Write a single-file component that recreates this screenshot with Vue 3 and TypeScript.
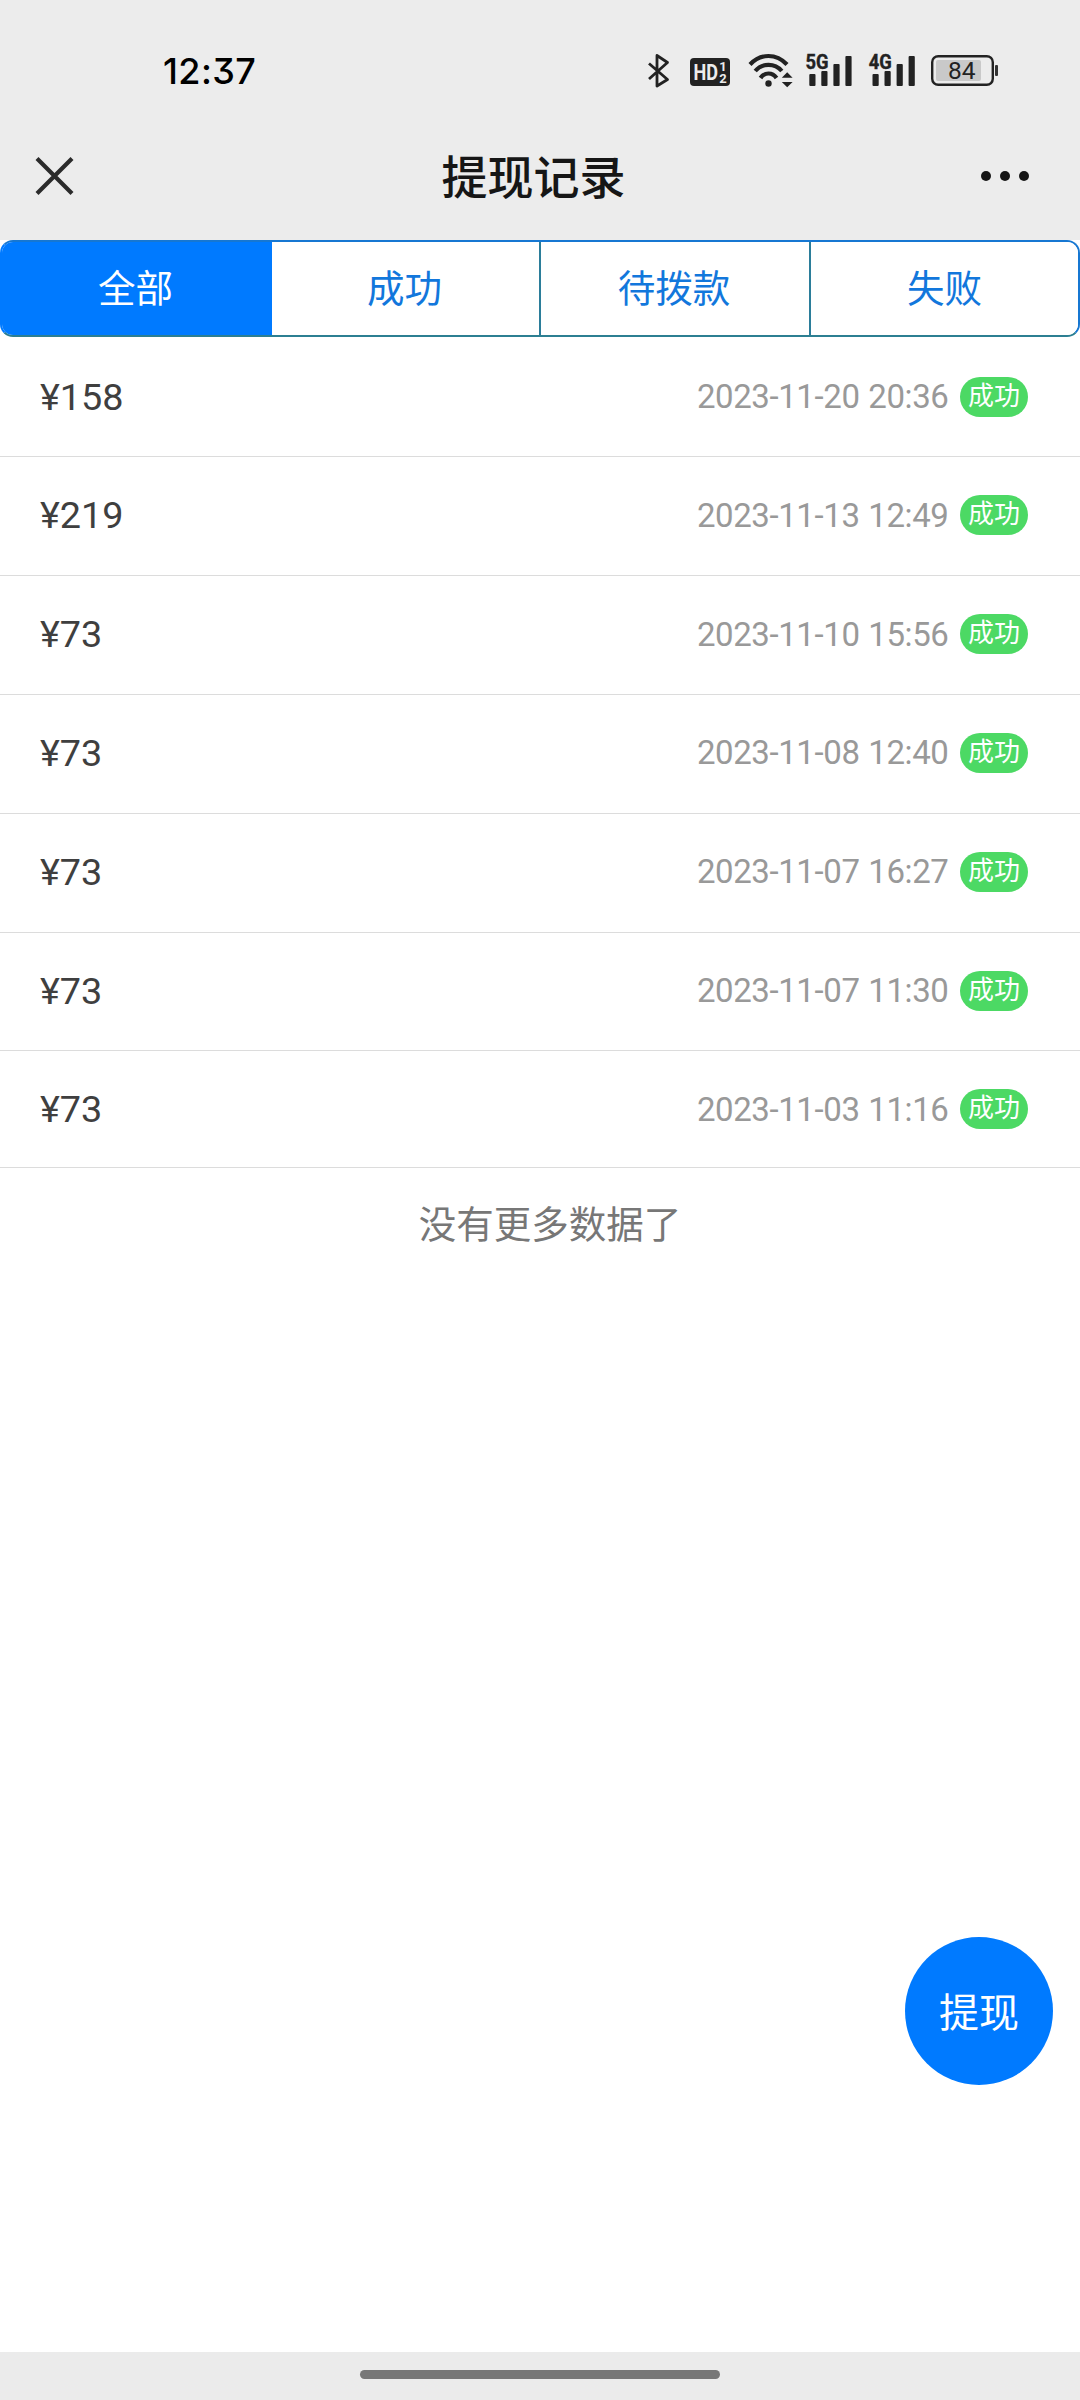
<script setup lang="ts">
interface Withdrawal {
  amount: number
  time: string
}

const tabs: string[] = ['全部', '成功', '待拨款', '失败']
const active = 0

const records: Withdrawal[] = [
  { amount: 158, time: '2023-11-20 20:36' },
  { amount: 219, time: '2023-11-13 12:49' },
  { amount: 73, time: '2023-11-10 15:56' },
  { amount: 73, time: '2023-11-08 12:40' },
  { amount: 73, time: '2023-11-07 16:27' },
  { amount: 73, time: '2023-11-07 11:30' },
  { amount: 73, time: '2023-11-03 11:16' },
]

const networks = [
  { label: '5G', x: 0 },
  { label: '4G', x: 63.2 },
]
</script>

<template>
  <div class="screen">
    <div class="status">
      <span class="clock">12:37</span>
      <svg class="status-icons" width="360" height="40" viewBox="640 50 360 40">
        <!-- bluetooth -->
        <path d="M649 63.5 667.5 79.5 657 86V55.5L667.5 62.5 649 79" fill="none" stroke="#222" stroke-width="2.8" stroke-linejoin="round" />
        <!-- HD calling -->
        <rect x="690" y="58" width="40" height="28" rx="4" fill="#222" />
        <text x="693.5" y="80.3" class="bold" font-size="22.5" fill="#ececec" textLength="24.5" lengthAdjust="spacingAndGlyphs">HD</text>
        <text x="719.2" y="71" class="bold" font-size="13" fill="#ececec">1</text>
        <text x="719.2" y="82.7" class="bold" font-size="13" fill="#ececec">2</text>
        <!-- wifi -->
        <g fill="none" stroke="#222" stroke-width="4.2">
          <path d="M750 64.5Q758 56 768.5 56T787 64.5" />
          <path d="M755.2 71Q760.5 64.8 768.5 64.8T781.8 71" />
          <path d="M760.5 78Q763.5 73.5 768.5 73.5T776.5 78" />
        </g>
        <circle cx="768.5" cy="83.5" r="3.2" fill="#222" />
        <path d="M781.8 77.8 787.2 72.3 792.6 77.8ZM781.8 82 787.2 87.3 792.6 82Z" fill="#222" />
        <!-- mobile networks -->
        <g v-for="n in networks" :key="n.label" :transform="`translate(${n.x} 0)`" fill="#222">
          <rect x="809.3" y="74" width="6.2" height="12" rx="1" />
          <rect x="821.3" y="71" width="6.2" height="15" rx="1" />
          <rect x="833.4" y="64" width="6.2" height="22" rx="1" />
          <rect x="845.4" y="56" width="6.2" height="30" rx="1" />
          <text x="805.5" y="68.6" class="bold" font-size="20.5" stroke="#222" stroke-width="0.4" textLength="23" lengthAdjust="spacingAndGlyphs">{{ n.label }}</text>
        </g>
        <!-- battery -->
        <rect x="932.2" y="56.2" width="60.6" height="28.6" rx="6" fill="none" stroke="#222" stroke-width="2.4" />
        <rect x="936" y="60" width="45" height="21" rx="2" fill="#c9c9c9" />
        <rect x="995" y="65" width="3" height="11" rx="1" fill="#333" />
        <text x="948" y="79.2" font-size="24.5" fill="#222">84</text>
      </svg>
    </div>

    <header class="nav">
      <svg width="40" height="40" viewBox="0 0 40 40" fill="none" stroke="#2b2b2b" stroke-width="4.2">
        <path d="M3 2.5 38 37.5M38 2.5 3 37.5" />
      </svg>
      <h1>提现记录</h1>
      <svg width="50" height="12" viewBox="0 0 50 12" fill="#161616">
        <circle cx="6" cy="6" r="5" /><circle cx="25" cy="6" r="5" /><circle cx="44" cy="6" r="5" />
      </svg>
    </header>

    <nav class="tabs">
      <button v-for="(t, i) in tabs" :key="t" :class="['tab', { active: i === active }]">{{ t }}</button>
    </nav>

    <ul class="list">
      <li v-for="r in records" :key="r.time">
        <span class="amount">¥{{ r.amount }}</span>
        <span class="time">{{ r.time }}</span>
        <span class="badge">成功</span>
      </li>
    </ul>
    <p class="end">没有更多数据了</p>

    <button class="fab">提现</button>
    <footer class="gesture"><i></i></footer>
  </div>
</template>

<style>
body {
  margin: 0;
}
</style>

<style scoped>
.screen {
  position: relative;
  display: flex;
  flex-direction: column;
  width: 1080px;
  height: 2400px;
  background: #fff;
  font-family: Roboto, 'Noto Sans CJK SC', sans-serif;
  overflow: hidden;
}
.status {
  display: flex;
  align-items: flex-start;
  justify-content: space-between;
  box-sizing: border-box;
  height: 136px;
  padding: 50px 80px 0 163px;
  background: #ececec;
}
.clock {
  font: 500 36px/42px Inter, sans-serif;
  font-feature-settings: 'cv09';
  letter-spacing: 0.4px;
  color: #000;
}
.bold {
  font-weight: 700;
}
.nav {
  display: flex;
  align-items: center;
  box-sizing: border-box;
  height: 104px;
  padding: 0 50px 24px 34px;
  background: #ececec;
}
.nav h1 {
  flex: 1;
  margin: 0;
  padding: 3px 0 0 13px;
  text-align: center;
  font-size: 46px;
  line-height: 60px;
  font-weight: 500;
  color: #161616;
}
.tabs {
  display: grid;
  grid-template-columns: 270px 267px 270px 1fr;
  box-sizing: border-box;
  height: 97px;
  border: 2px solid #1677d2;
  border-bottom-color: #2c7f92;
  border-radius: 13px;
  background: #fff;
  overflow: hidden;
}
.tab {
  padding: 0;
  border: 0;
  border-left: 2px solid #2b7d9a;
  background: #fff;
  font: 37.5px/48px Roboto, 'Noto Sans CJK SC', sans-serif;
  color: #1277dc;
}
.tab:nth-child(2) {
  padding-right: 2px;
  border-left: 0;
}
.tab:nth-child(3) {
  padding-right: 2px;
}
.tab.active {
  margin: -2px 0 -2px -2px;
  padding-right: 1px;
  border-left: 0;
  background: #007aff;
  color: #fff;
}
.tabs:has(.active:first-child) {
  border-left-color: #007aff;
}
.list {
  margin: 1.7px 0 0;
  padding: 0;
  list-style: none;
}
.list li {
  display: flex;
  align-items: center;
  box-sizing: border-box;
  height: 118.8px;
  padding: 0 52px 2px 40px;
  border-bottom: 1px solid #dcdcdc;
}
.list li:last-child {
  height: 116.8px;
  padding-bottom: 0;
}
.amount {
  flex: 1;
  font-size: 37.8px;
  color: #3f3f3f;
}
.time {
  font-size: 33px;
  letter-spacing: -0.4px;
  word-spacing: 1px;
  color: #999;
}
.badge {
  margin-left: 11.5px;
  width: 68px;
  height: 40px;
  border-radius: 20px;
  background: #4cd964;
  color: #fff;
  font-size: 26px;
  line-height: 39px;
  text-align: center;
}
.end {
  margin: 29px 0 0 20px;
  text-align: center;
  font-size: 37.5px;
  line-height: 56px;
  color: #777;
}
.fab {
  position: absolute;
  left: 905px;
  top: 1937px;
  width: 148px;
  height: 148px;
  padding: 5px 0 0;
  border: 0;
  border-radius: 50%;
  background: #007aff;
  color: #fff;
  font: 40px/48px Roboto, 'Noto Sans CJK SC', sans-serif;
}
.gesture {
  display: flex;
  justify-content: center;
  box-sizing: border-box;
  height: 48px;
  margin-top: auto;
  padding-top: 18px;
  background: #ebebeb;
}
.gesture i {
  width: 360px;
  height: 9px;
  border-radius: 5px;
  background: #777;
}
</style>
